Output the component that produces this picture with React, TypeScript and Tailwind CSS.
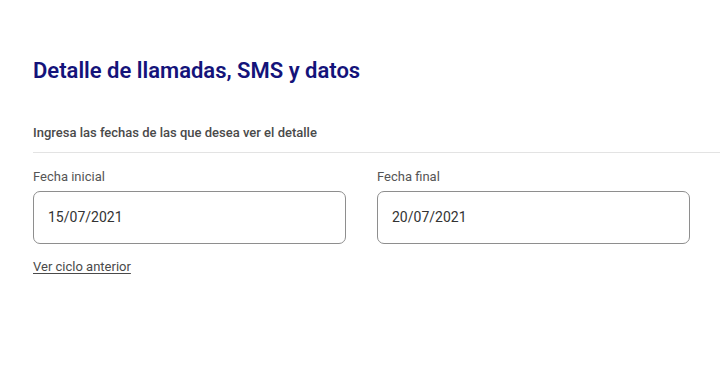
const DateField = ({ label, value }: { label: string; value: string }) => (
  <div className="flex flex-col">
    <label className="text-[13px] leading-4 text-[#555555]">{label}</label>
    <div className="mt-[6px] flex h-[53px] w-[313px] items-center rounded-[7px] border border-[#8e8e8e] px-[14px] text-[14px] text-[#333333]">
      {value}
    </div>
  </div>
);

export default function App() {
  return (
    <div
      className="h-[388px] w-[720px] bg-white pt-[57px]"
      style={{ fontFamily: "Roboto, 'Liberation Sans', sans-serif" }}
    >
      <h1 className="pl-[33px] text-[22px] font-semibold leading-7 text-[#14137a]">
        Detalle de llamadas, SMS y datos
      </h1>
      <p className="mt-[40px] pl-[33px] text-[13px] font-medium leading-4 text-[#4a4a4a]">
        Ingresa las fechas de las que desea ver el detalle
      </p>
      <div className="ml-[33px] mt-[11px] h-px bg-[#e3e3e3]" />
      <div className="mt-[16px] flex gap-[31px] pl-[33px]">
        <DateField label="Fecha inicial" value="15/07/2021" />
        <DateField label="Fecha final" value="20/07/2021" />
      </div>
      <a href="#" className="ml-[33px] mt-[15px] inline-block text-[13px] leading-4 text-[#4a4a4a] underline underline-offset-2">
        Ver ciclo anterior
      </a>
    </div>
  );
}
